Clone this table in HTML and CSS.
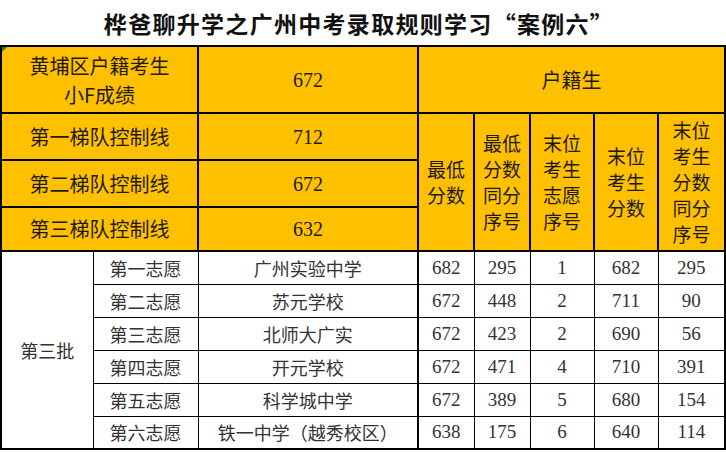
FILE: index.html
```html
<!DOCTYPE html>
<html lang="zh-CN">
<head>
<meta charset="utf-8">
<title>案例六</title>
<link rel="stylesheet" href="styles.css">
</head>
<body>
<div class="page">
  <h1 class="title">桦爸聊升学之广州中考录取规则学习“案例六”</h1>
  <div class="table-wrap">
    <span class="comment-mark"></span>
    <table class="sheet">
      <colgroup>
        <col class="c1"><col class="c2"><col class="c3"><col class="c4"><col class="c5"><col class="c6"><col class="c7"><col class="c8">
      </colgroup>
      <tbody>
        <tr class="y r1">
          <td colspan="2" class="lbl two">黄埔区户籍考生<br>小F成绩</td>
          <td class="num">672</td>
          <td colspan="5" class="lbl">户籍生</td>
        </tr>
        <tr class="y r2">
          <td colspan="2" class="lbl">第一梯队控制线</td>
          <td class="num">712</td>
          <td rowspan="3" class="hd">最低<br>分数</td>
          <td rowspan="3" class="hd">最低<br>分数<br>同分<br>序号</td>
          <td rowspan="3" class="hd">末位<br>考生<br>志愿<br>序号</td>
          <td rowspan="3" class="hd">末位<br>考生<br>分数</td>
          <td rowspan="3" class="hd">末位<br>考生<br>分数<br>同分<br>序号</td>
        </tr>
        <tr class="y r2">
          <td colspan="2" class="lbl">第二梯队控制线</td>
          <td class="num">672</td>
        </tr>
        <tr class="y r4">
          <td colspan="2" class="lbl">第三梯队控制线</td>
          <td class="num">632</td>
        </tr>
        <tr class="d">
          <td rowspan="6" class="batch">第三批</td>
          <td>第一志愿</td><td>广州实验中学</td>
          <td class="num">682</td><td class="num">295</td><td class="num">1</td><td class="num">682</td><td class="num">295</td>
        </tr>
        <tr class="d">
          <td>第二志愿</td><td>苏元学校</td>
          <td class="num">672</td><td class="num">448</td><td class="num">2</td><td class="num">711</td><td class="num">90</td>
        </tr>
        <tr class="d">
          <td>第三志愿</td><td>北师大广实</td>
          <td class="num">672</td><td class="num">423</td><td class="num">2</td><td class="num">690</td><td class="num">56</td>
        </tr>
        <tr class="d">
          <td>第四志愿</td><td>开元学校</td>
          <td class="num">672</td><td class="num">471</td><td class="num">4</td><td class="num">710</td><td class="num">391</td>
        </tr>
        <tr class="d">
          <td>第五志愿</td><td>科学城中学</td>
          <td class="num">672</td><td class="num">389</td><td class="num">5</td><td class="num">680</td><td class="num">154</td>
        </tr>
        <tr class="d">
          <td>第六志愿</td><td>铁一中学（越秀校区）</td>
          <td class="num">638</td><td class="num">175</td><td class="num">6</td><td class="num">640</td><td class="num">114</td>
        </tr>
      </tbody>
    </table>
  </div>
</div>
</body>
</html>
```

FILE: styles.css
```css
html, body {
  margin: 0;
  padding: 0;
  background: #ffffff;
}

.page {
  width: 726px;
  height: 452px;
  overflow: hidden;
  font-family: "Liberation Serif", "Noto Sans CJK SC", serif;
}

.title {
  margin: 0;
  height: 45px;
  display: flex;
  align-items: center;
  justify-content: center;
  padding-right: 8px;
  font-family: "Noto Sans CJK SC", sans-serif;
  font-size: 23px;
  font-weight: 700;
  letter-spacing: 1.3px;
  color: #111;
}

.table-wrap {
  position: relative;
  width: 724px;
}

.comment-mark {
  position: absolute;
  left: 2px;
  top: 2px;
  width: 0;
  height: 0;
  border-top: 5px solid #2e7d32;
  border-right: 5px solid transparent;
  z-index: 2;
}

.sheet {
  border-collapse: collapse;
  table-layout: fixed;
  width: 724px;
  border: 2px solid #000;
}

.c1 { width: 92px; }
.c2 { width: 105px; }
.c3 { width: 220px; }
.c4 { width: 56px; }
.c5 { width: 56px; }
.c6 { width: 64px; }
.c7 { width: 64px; }
.c8 { width: 67px; }

.sheet td {
  border: 1px solid #000;
  padding: 0;
  text-align: center;
  vertical-align: middle;
  font-size: 18px;
  line-height: 22px;
  color: #333;
  white-space: nowrap;
}

.sheet .y td {
  border-width: 2px;
  background: #ffc000;
  color: #1e1a0c;
  font-size: 20px;
}

.r1 { height: 67px; }
.r2 { height: 47px; }
.r4 { height: 44px; }
.d { height: 33px; }

.sheet .y td.lbl {
  font-family: "Noto Sans CJK SC", sans-serif;
}

.sheet .y td.two {
  line-height: 29px;
}

.sheet .y td.hd {
  font-family: "Noto Sans CJK SC", sans-serif;
  font-size: 19px;
  line-height: 26px;
}

.sheet td.num {
  font-family: "Liberation Serif", serif;
  font-size: 19px;
}

.sheet .y td.num {
  font-size: 20px;
}

.sheet .d td {
  font-family: "Noto Sans CJK SC", sans-serif;
}

.sheet .d td.num {
  font-family: "Liberation Serif", serif;
}

.sheet .d td.batch {
  border-right-width: 1px;
}

.sheet .d td:nth-last-child(6) {
  border-right: 2px solid #000;
}
```
